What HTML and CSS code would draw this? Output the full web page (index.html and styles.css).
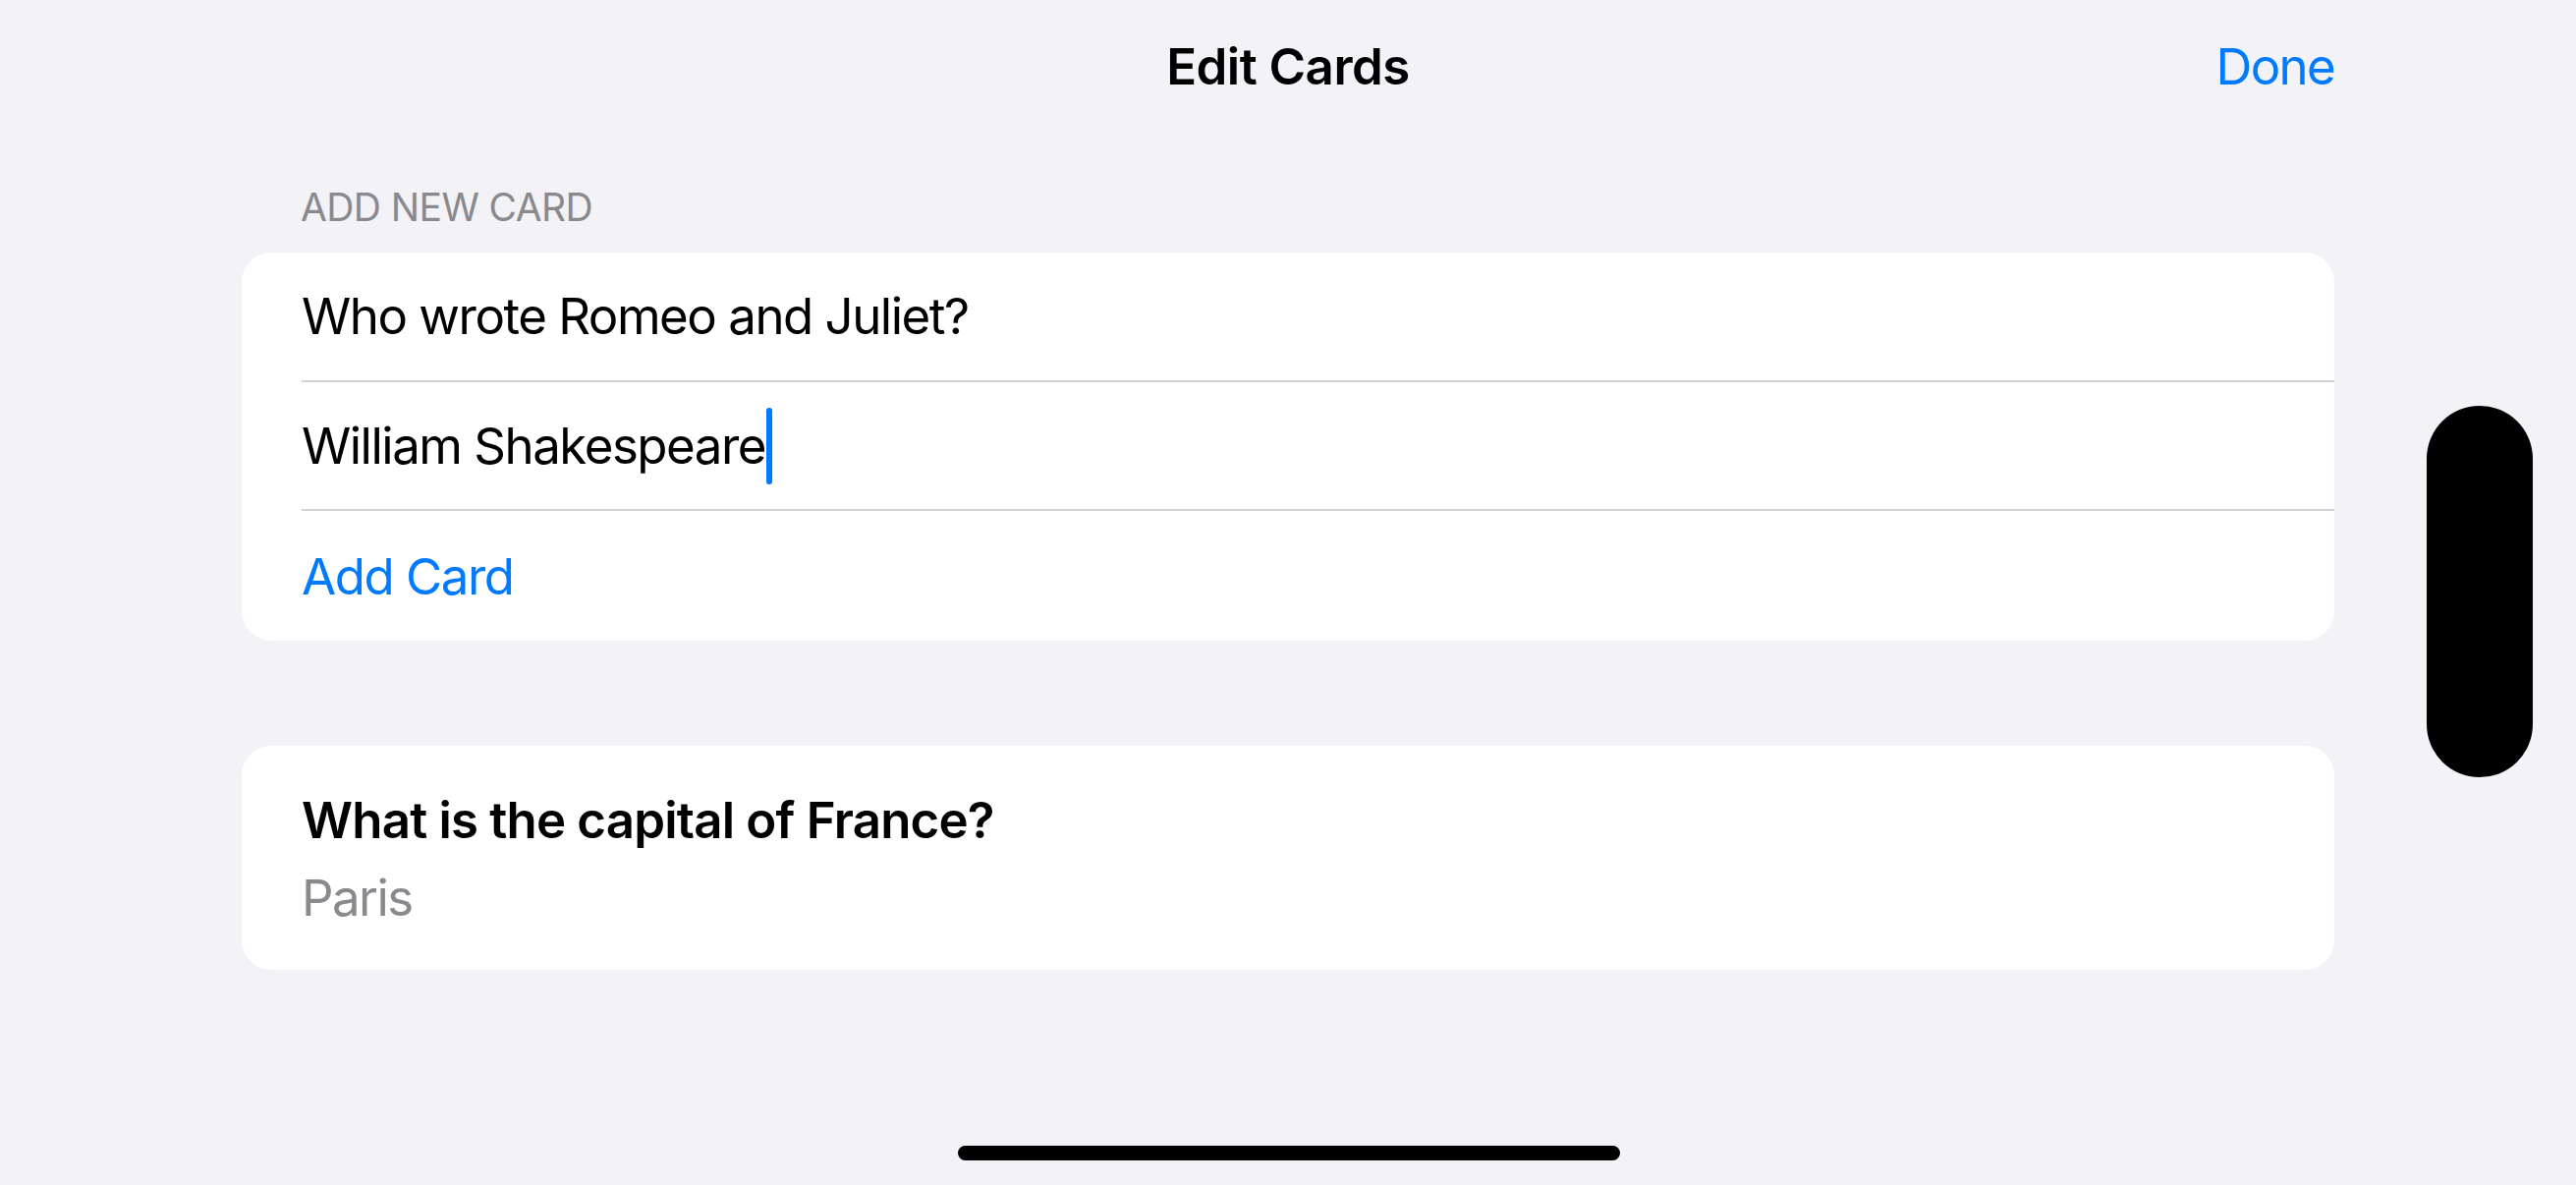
FILE: index.html
```html
<!DOCTYPE html>
<html>
<head>
<meta charset="utf-8">
<link rel="stylesheet" href="styles.css">
</head>
<body>
<div class="screen">
  <header class="nav">
    <div class="nav-side"></div>
    <div class="nav-title">Edit Cards</div>
    <div class="nav-side nav-right"><span class="nav-done">Done</span></div>
  </header>
  <main class="content">
    <div class="section-header">ADD NEW CARD</div>
    <section class="group">
      <div class="row"><span class="row-text">Who wrote Romeo and Juliet?</span></div>
      <div class="row"><span class="row-text">William Shakespeare</span><span class="cursor"></span></div>
      <div class="row row-last"><span class="row-text link">Add Card</span></div>
    </section>
    <section class="group card-item">
      <div class="card-q">What is the capital of France?</div>
      <div class="card-a">Paris</div>
    </section>
  </main>
  <div class="side-pill"></div>
  <div class="home-indicator"></div>
</div>
</body>
</html>
```
FILE: styles.css
```css
* { box-sizing: border-box; }
html, body { margin: 0; padding: 0; }
body {
  background: #f2f2f7;
  font-family: "Inter", "Liberation Sans", sans-serif;
  color: #000;
}
.screen {
  position: relative;
  width: 2622px;
  height: 1206px;
  overflow: hidden;
  background: #f2f2f7;
}
.nav {
  height: 134px;
  padding: 0 246px;
  display: grid;
  grid-template-columns: 1fr auto 1fr;
  align-items: center;
}
.nav-title {
  font-size: 51px;
  font-weight: 600;
  letter-spacing: -0.5px;
}
.nav-right { text-align: right; }
.nav-done {
  font-size: 51px;
  color: #007aff;
  letter-spacing: -1.7px;
}
.content {
  padding: 0 246px;
  display: flex;
  flex-direction: column;
}
.section-header {
  padding: 54px 0 0 60px;
  height: 123px;
  font-size: 39px;
  line-height: 46px;
  color: #8a8a8e;
  letter-spacing: -0.6px;
}
.group {
  background: #fff;
  border-radius: 30px;
  overflow: hidden;
}
.row {
  height: 131.7px;
  margin-left: 61px;
  display: flex;
  align-items: center;
  border-bottom: 2px solid #d1d1d6;
}
.row-last { border-bottom: none; }
.row-text {
  font-size: 51px;
  letter-spacing: -1.5px;
}
.link { color: #007aff; }
.cursor {
  width: 6px;
  height: 78px;
  border-radius: 3px;
  background: #007aff;
  margin-left: 1px;
}
.card-item {
  margin-top: 107px;
  height: 228px;
  padding: 45px 61px 0;
}
.card-q {
  font-size: 51px;
  line-height: 61px;
  font-weight: 600;
  letter-spacing: -0.8px;
}
.card-a {
  font-size: 51px;
  line-height: 61px;
  margin-top: 18px;
  color: #8a8a8e;
  letter-spacing: -1.6px;
}
.side-pill {
  position: absolute;
  left: 2470px;
  top: 413px;
  width: 108px;
  height: 378px;
  border-radius: 54px;
  background: #000;
}
.home-indicator {
  position: absolute;
  left: 975px;
  top: 1166px;
  width: 674px;
  height: 15px;
  border-radius: 8px;
  background: #000;
}
```
